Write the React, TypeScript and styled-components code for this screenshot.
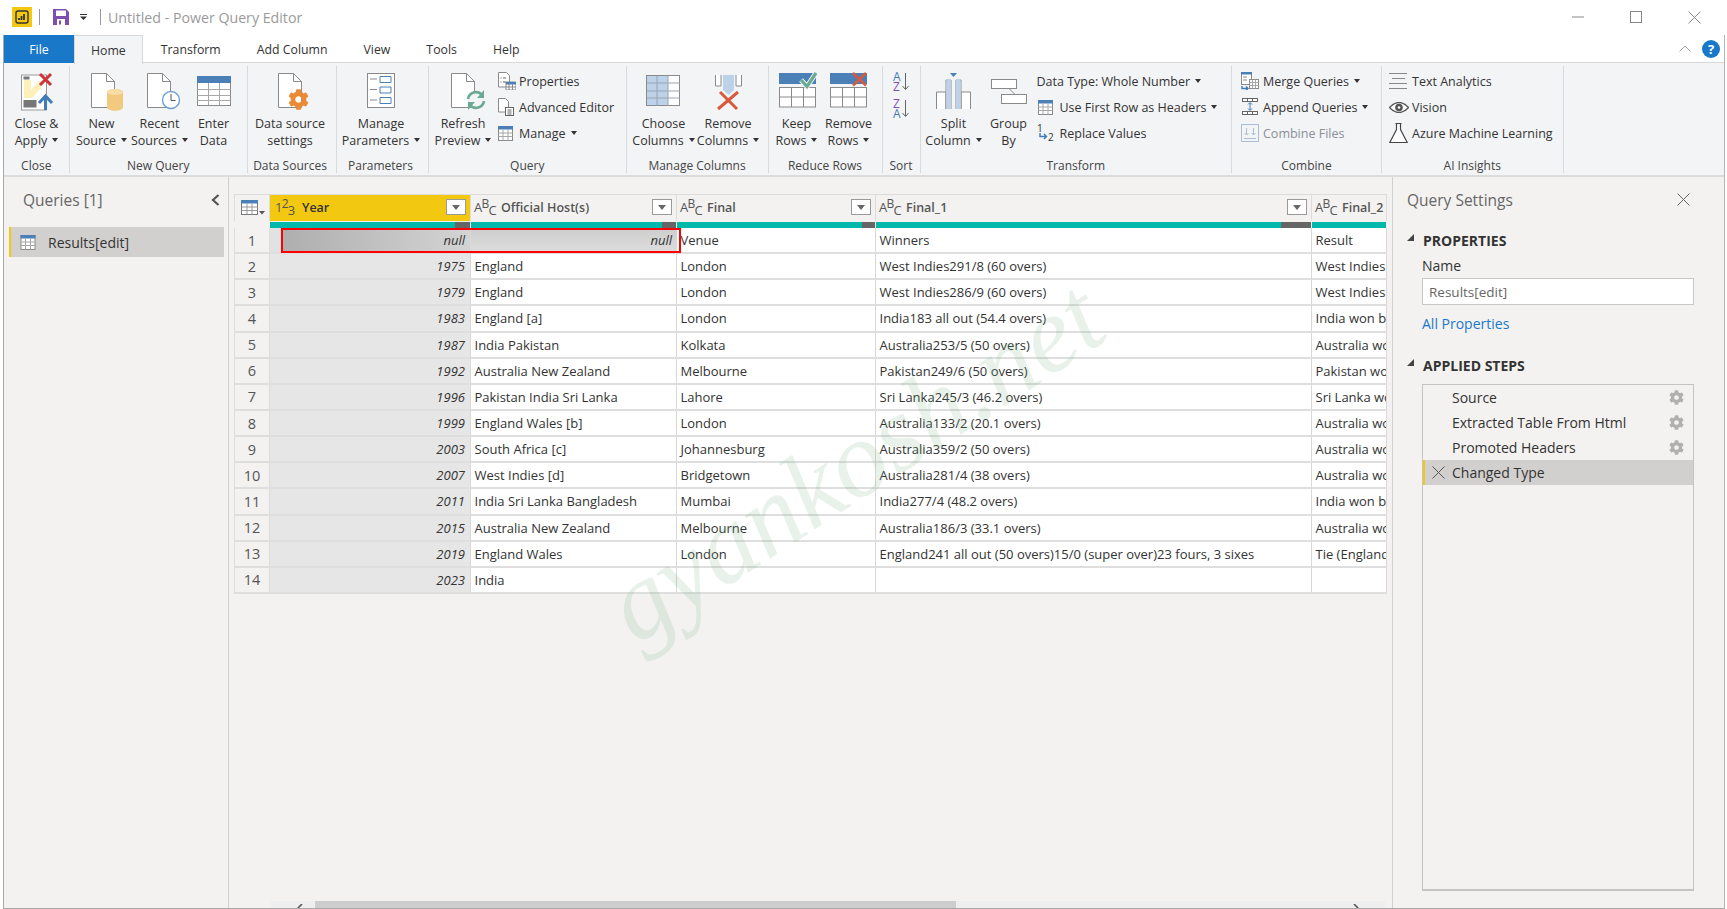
import React from 'react';
import styled, { createGlobalStyle } from 'styled-components';
import { FaCog } from 'react-icons/fa';

const GlobalStyle = createGlobalStyle`
  html, body {
    margin: 0;
    padding: 0;
    background: #fff;
    overflow: hidden;
  }
  * {
    box-sizing: border-box;
  }
`;

const FONT = '"Open Sans", "Noto Sans", "Liberation Sans", sans-serif';
const COLS = '36px 201px 206px 199px 436px 75px';

const Frame = styled.div`
  width: 1727px;
  height: 909px;
  padding: 0 2px 0 3px;
  font-family: ${FONT};
  font-size: 12.5px;
  color: #333;
  display: flex;
  flex-direction: column;
`;

const Window = styled.div`
  flex: 1;
  min-height: 0;
  border-left: 1px solid #a8a8a8;
  border-right: 1px solid #b4b4b4;
  border-bottom: 1px solid #a8a8a8;
  display: flex;
  flex-direction: column;
`;

const TitleBar = styled.div`
  height: 35px;
  display: flex;
  align-items: center;
  padding: 0 0 1px 9px;
  background: #fff;
`;

const TitleDivider = styled.span<{ $ml: number }>`
  width: 1px;
  height: 16px;
  background: #999;
  margin-left: ${(p) => p.$ml}px;
`;

const TitleText = styled.span`
  margin-left: 7px;
  font-size: 14.2px;
  color: #9a9a9a;
`;

const WindowControls = styled.div`
  margin-left: auto;
  display: flex;
  align-items: center;
  padding-right: 24px;
  gap: 46px;
`;

const TabBar = styled.div`
  height: 28px;
  display: flex;
  align-items: flex-start;
  border-bottom: 1px solid #d8d8d8;
  background: #fff;
  font-size: 12.3px;
`;

const FileTab = styled.div`
  width: 70px;
  height: 28px;
  background: #1a78c9;
  color: #fff;
  display: flex;
  align-items: center;
  justify-content: center;
`;

const Tab = styled.div<{ $active?: boolean }>`
  height: ${(p) => (p.$active ? 29 : 27)}px;
  padding: 1px ${(p) => (p.$active ? 16 : 18)}px 0;
  display: flex;
  align-items: center;
  color: #333;
  background: ${(p) => (p.$active ? '#f3f4f6' : '#fff')};
  border: ${(p) => (p.$active ? '1px solid #d8d8d8' : 'none')};
  border-bottom: none;
  position: relative;
`;

const TabTools = styled.div`
  margin-left: auto;
  height: 27px;
  display: flex;
  align-items: center;
  gap: 11px;
  padding-right: 4px;
`;

const HelpBadge = styled.span`
  width: 18px;
  height: 18px;
  border-radius: 50%;
  background: #1a78c9;
  color: #fff;
  font-size: 13px;
  font-weight: 700;
  display: flex;
  align-items: center;
  justify-content: center;
`;

const Ribbon = styled.div`
  height: 114px;
  padding-top: 3px;
  background: #f3f4f6;
  border-bottom: 2px solid #dcdcdc;
  display: flex;
  align-items: flex-start;
`;

const Group = styled.div<{ $w: number; $pr?: number }>`
  width: ${(p) => p.$w}px;
  height: 107px;
  padding-right: ${(p) => p.$pr ?? 0}px;
  border-right: 1px solid #d9dade;
  display: flex;
  flex-direction: column;
`;

const GroupBody = styled.div<{ $pl?: number }>`
  flex: 1;
  display: flex;
  align-items: flex-start;
  padding-left: ${(p) => p.$pl ?? 0}px;
`;

const GroupLabel = styled.div`
  height: 17px;
  margin-bottom: -1px;
  line-height: 17px;
  text-align: center;
  font-size: 12px;
  color: #444;
  white-space: nowrap;
`;

const BigButton = styled.div<{ $w: number }>`
  width: ${(p) => p.$w}px;
  flex: none;
  padding-top: 7px;
  display: flex;
  flex-direction: column;
  align-items: center;
  text-align: center;
  line-height: 17px;
  white-space: nowrap;
`;

const IconBox = styled.div<{ $dx?: number }>`
  height: 38px;
  margin-bottom: 4px;
  margin-left: ${(p) => p.$dx ?? 0}px;
  display: flex;
  justify-content: center;
  svg {
    overflow: visible;
    display: block;
  }
`;

const Caret = styled.span`
  display: inline-block;
  width: 0;
  height: 0;
  margin-left: 5px;
  vertical-align: 3px;
  border-left: 3.5px solid transparent;
  border-right: 3.5px solid transparent;
  border-top: 4px solid #333;
`;

const SmallColumn = styled.div<{ $ml?: number }>`
  padding-top: 2px;
  margin-left: ${(p) => p.$ml ?? 0}px;
  display: flex;
  flex-direction: column;
`;

const SmallButton = styled.div<{ $disabled?: boolean }>`
  height: 26px;
  display: flex;
  align-items: center;
  white-space: nowrap;
  color: ${(p) => (p.$disabled ? '#8a8f96' : '#333')};
`;

const SmallIcon = styled.span<{ $w?: number }>`
  width: ${(p) => p.$w ?? 22}px;
  flex: none;
  display: flex;
  align-items: center;
`;

const SortStack = styled.div`
  flex: 1;
  padding-top: 6px;
  display: flex;
  flex-direction: column;
  align-items: center;
  gap: 8px;
`;

const Body = styled.div`
  flex: 1;
  min-height: 0;
  display: flex;
  background: #f3f2f1;
`;

const QueriesPane = styled.aside`
  width: 225px;
  flex: none;
  border-right: 1px solid #d0d0d0;
  padding: 11px 0 0 5px;
`;

const PaneHeader = styled.div`
  height: 23px;
  padding: 0 8px 0 14px;
  display: flex;
  align-items: center;
  justify-content: space-between;
  font-size: 15.5px;
  color: #666;
`;

const QueryRow = styled.div`
  width: 215px;
  height: 30px;
  margin-top: 16px;
  background: #d2d0ce;
  border-left: 2px solid #f2c811;
  padding-left: 9px;
  display: flex;
  align-items: center;
  gap: 12px;
  font-size: 14px;
  color: #333;
`;

const Center = styled.main`
  flex: 1;
  min-width: 0;
  position: relative;
  padding: 17px 0 0 5px;
  display: flex;
  flex-direction: column;
`;

const TableWrap = styled.div`
  width: 1153px;
  flex: 1;
  min-height: 0;
  overflow: hidden;
  font-size: 13px;
`;

const HeaderRow = styled.div`
  height: 27px;
  display: grid;
  grid-template-columns: ${COLS};
  border-top: 1px solid #dcdcdc;
`;

const HeaderCell = styled.div<{ $selected?: boolean }>`
  display: flex;
  align-items: center;
  padding: 0 0 2px ${(p) => (p.$selected ? 5 : 3)}px;
  background: ${(p) => (p.$selected ? '#f2c811' : '#f3f2f1')};
  border-right: 1px solid #dcdcdc;
  font-weight: 600;
  font-size: 12.5px;
  color: ${(p) => (p.$selected ? '#333' : '#555')};
  white-space: nowrap;
  overflow: hidden;
`;

const CornerCell = styled(HeaderCell)`
  border-left: 1px solid #dcdcdc;
  padding-left: 6px;
`;

const TypeGlyph = styled.span`
  width: 27px;
  flex: none;
  font-size: 13px;
  font-weight: 400;
  color: #555;
  letter-spacing: -0.8px;
`;

const GlyphUp = styled.span`
  position: relative;
  top: -4px;
  font-size: 12px;
`;

const GlyphDown = styled.span`
  position: relative;
  top: 3px;
  font-size: 13px;
`;

const FilterButton = styled.span`
  width: 20px;
  height: 16px;
  margin-left: auto;
  margin-right: 4px;
  flex: none;
  background: #fff;
  border: 1px solid #9a9a9a;
  display: flex;
  align-items: center;
  justify-content: center;
  &::after {
    content: '';
    border-left: 4px solid transparent;
    border-right: 4px solid transparent;
    border-top: 5px solid #666;
  }
`;

const QualityRow = styled.div`
  height: 6px;
  margin-top: 1px;
  display: grid;
  grid-template-columns: ${COLS};
`;

const QualityCell = styled.div<{ $empty: number }>`
  display: flex;
  border-right: 1px solid #f3f2f1;
  &::before {
    content: '';
    flex: 1;
    background: #01b8aa;
  }
  &::after {
    content: '';
    width: ${(p) => p.$empty}px;
    background: #666;
  }
`;

const BlankCell = styled.div``;

const DataRow = styled.div`
  position: relative;
  height: 26.15px;
  display: grid;
  grid-template-columns: ${COLS};
  border-bottom: 2px solid #dedede;
`;

const RowNumber = styled.div`
  border-left: 1px solid #dcdcdc;
  border-right: 1px solid #dcdcdc;
  background: #f3f2f1;
  display: flex;
  align-items: center;
  justify-content: center;
  font-size: 14.5px;
  color: #555;
`;

const YearCell = styled.div<{ $null?: boolean }>`
  background: ${(p) => (p.$null ? 'linear-gradient(90deg, #e2e2e2 5.5%, #aeaeae 6.5%, #d4d4d4 100%)' : '#e6e6e6')};
  border-right: 1px solid #d8d8d8;
  padding-right: 5px;
  display: flex;
  align-items: center;
  justify-content: flex-end;
  font-style: italic;
  color: #333;
`;

const NullCell = styled.div`
  background: linear-gradient(180deg, #cdcdcd, #dddddd);
  padding-right: 5px;
  display: flex;
  align-items: center;
  justify-content: flex-end;
  font-style: italic;
  color: #333;
`;

const TextCell = styled.div`
  background: #fff;
  border-right: 1px solid #d8d8d8;
  padding-left: 3.5px;
  display: flex;
  align-items: center;
  white-space: nowrap;
  overflow: hidden;
  color: #333;
`;

const RedBox = styled.div`
  position: absolute;
  left: 47px;
  top: 0;
  width: 400px;
  height: 25px;
  border: 2px solid #ff0000;
  pointer-events: none;
`;

const Watermark = styled.div`
  position: absolute;
  left: 625px;
  top: 284px;
  transform: translate(-50%, -50%) rotate(-33deg);
  font-family: 'Liberation Serif', serif;
  font-style: italic;
  font-size: 108px;
  color: rgba(120, 180, 130, 0.17);
  white-space: nowrap;
  pointer-events: none;
`;

const ScrollTrack = styled.div`
  width: 1114px;
  height: 7px;
  margin-left: 37px;
  flex: none;
  background: #eeeeee;
  display: flex;
  align-items: flex-start;
  overflow: hidden;
`;

const ScrollThumb = styled.div`
  width: 641px;
  height: 7px;
  margin-left: 12px;
  background: #cdcdcd;
`;

const ScrollArrow = styled.svg<{ $right?: boolean }>`
  margin: 3px ${(p) => (p.$right ? 26 : 0)}px 0 ${(p) => (p.$right ? 'auto' : '26px')};
  flex: none;
`;

const SettingsPane = styled.aside`
  width: 332px;
  flex: none;
  border-left: 1px solid #d0d0d0;
  padding: 11px 30px 17px 14px;
  display: flex;
  flex-direction: column;
`;

const SettingsHeader = styled.div`
  height: 23px;
  display: flex;
  align-items: center;
  justify-content: space-between;
  padding-right: 4px;
  font-size: 15.5px;
  color: #666;
`;

const SectionTitle = styled.div<{ $mt: number }>`
  margin-top: ${(p) => p.$mt}px;
  height: 20px;
  display: flex;
  align-items: center;
  gap: 9px;
  font-size: 14px;
  font-weight: 700;
  color: #333;
`;

const SectionCaret = styled.svg`
  flex: none;
  margin-top: -6px;
`;

const Indented = styled.div`
  margin-left: 15px;
`;

const FieldLabel = styled.div`
  margin-top: 6px;
  height: 20px;
  line-height: 20px;
  font-size: 14px;
  color: #333;
`;

const NameInput = styled.div`
  margin-top: 2px;
  height: 27px;
  padding-left: 6px;
  background: #fff;
  border: 1px solid #c8c8c8;
  display: flex;
  align-items: center;
  font-size: 13.5px;
  color: #666;
`;

const AllProps = styled.div`
  margin-top: 9px;
  height: 20px;
  line-height: 20px;
  font-size: 14px;
  color: #1a78c9;
`;

const StepsBox = styled(Indented)`
  flex: 1;
  margin-top: 9px;
  background: #f3f2f1;
  border: 1px solid #c4c4c4;
  border-bottom: 2px solid #c4c4c4;
`;

const StepRow = styled.div<{ $selected?: boolean }>`
  height: 25px;
  display: flex;
  align-items: center;
  padding-right: 9px;
  background: ${(p) => (p.$selected ? '#d2d0ce' : 'transparent')};
  border-left: 2px solid ${(p) => (p.$selected ? '#f2c811' : 'transparent')};
  font-size: 14px;
  color: #333;
`;

const StepMark = styled.span`
  width: 27px;
  padding-left: 7px;
  flex: none;
  display: flex;
`;

const StepGear = styled.span`
  margin-left: auto;
  display: flex;
  color: #b0b0b0;
`;

const Doc = () => (
  <>
    <path d="M.5.5h15l8 8v26H.5z" fill="#fff" stroke="#8a8a8a" />
    <path d="M15.5.5v8h8" fill="none" stroke="#8a8a8a" />
  </>
);

const LogoIcon = () => (
  <svg width="20" height="20" viewBox="0 0 20 20">
    <rect width="20" height="20" fill="#f2c811" />
    <rect x="4" y="4" width="12" height="12" rx="2" fill="none" stroke="#333" strokeWidth="1.4" />
    <path d="M7 13v-2M9.5 13V9M12 13V7" stroke="#333" strokeWidth="1.8" />
  </svg>
);

const SaveIcon = () => (
  <svg width="16" height="16" viewBox="0 0 16 16" style={{ marginLeft: 13 }}>
    <path d="M0 0h13l3 3v13H0z" fill="#7e4fb0" />
    <rect x="3" y="1.5" width="10" height="5.5" fill="#fff" />
    <rect x="4" y="10" width="8" height="6" fill="#fff" />
    <rect x="6" y="11.5" width="2" height="4" fill="#7e4fb0" />
  </svg>
);

const QuickCaret = () => (
  <svg width="7" height="6" viewBox="0 0 7 6" style={{ marginLeft: 11 }}>
    <path d="M0 0h7v1H0zM0 2.5h7L3.5 6z" fill="#333" />
  </svg>
);

const MinIcon = () => (
  <svg width="12" height="12" viewBox="0 0 12 12"><path d="M0 6h12" stroke="#888" /></svg>
);
const MaxIcon = () => (
  <svg width="12" height="12" viewBox="0 0 12 12"><rect x=".5" y=".5" width="11" height="11" fill="none" stroke="#888" /></svg>
);
const CloseIcon = ({ c = '#888' }: { c?: string }) => (
  <svg width="13" height="13" viewBox="0 0 13 13"><path d="M.5.5l12 12M12.5.5l-12 12" stroke={c} fill="none" /></svg>
);
const CollapseIcon = () => (
  <svg width="12" height="7" viewBox="0 0 12 7"><path d="M.5 6.5L6 1l5.5 5.5" stroke="#aaa" fill="none" /></svg>
);

const CloseApplyIcon = () => (
  <svg width="32" height="38" viewBox="0 0 32 38">
    <rect x=".5" y="2" width="25" height="35" fill="#fff" stroke="#999" />
    <path d="M3 7h7v10l8-9h2v7l-9 10H3z" fill="#fdf0b8" />
    <rect x="2.5" y="3.5" width="6" height="3" fill="#777" />
    <rect x="2.5" y="27" width="13" height="7.5" fill="#777" />
    <path d="M19 1l11 11M30 1L19 12" stroke="#d13438" strokeWidth="3" />
    <path d="M24.5 37V25M18 30l6.5-7 6.5 7" fill="none" stroke="#3f7cb8" strokeWidth="3" />
  </svg>
);

const NewSourceIcon = () => (
  <svg width="32" height="38" viewBox="0 0 32 38">
    <Doc />
    <path d="M16 19c0-4 16-4 16 0v15c0 5-16 5-16 0z" fill="#f1c97f" />
    <ellipse cx="24" cy="19" rx="8" ry="3" fill="#f7dca6" />
  </svg>
);

const RecentIcon = () => (
  <svg width="33" height="38" viewBox="0 0 33 38">
    <Doc />
    <circle cx="24" cy="27" r="8.5" fill="#fff" stroke="#6f9fd0" strokeWidth="1.4" />
    <path d="M24 21v6.500h4.500" fill="none" stroke="#555" />
  </svg>
);

const TableIcon = () => (
  <svg width="34" height="38" viewBox="0 0 34 38">
    <rect x=".5" y="3.5" width="33" height="29" fill="#fff" stroke="#8a8a8a" />
    <rect y="3" width="34" height="7" fill="#4a7fb8" />
    <path d="M.5 16.500h33M.5 22.500h33M.5 27.500h33M11.500 10v22M22.500 10v22" stroke="#a8a8a8" />
  </svg>
);

const SettingsDocIcon = () => (
  <svg width="31" height="38" viewBox="0 0 31 38">
    <Doc />
    <FaCog x="10" y="16" size={21} color="#ea8a35" />
  </svg>
);

const ParamsIcon = () => (
  <svg width="28" height="38" viewBox="0 0 28 38">
    <rect x=".5" y=".5" width="27" height="34" fill="#fff" stroke="#8a8a8a" />
    <path d="M3 6h7M3 16.500h7M3 27h7" stroke="#8a8a8a" />
    <path d="M13 3.500h11v6H13zM13 14h11v6H13zM13 24.500h11v6H13z" fill="#fff" stroke="#4a7fb8" />
  </svg>
);

const RefreshIcon = () => (
  <svg width="34" height="38" viewBox="0 0 34 38">
    <Doc />
    <circle cx="25" cy="27" r="8.500" fill="#f3f4f6" />
    <path d="M17 26a8 8 0 0 1 14-4M33 28a8 8 0 0 1-14 4" fill="none" stroke="#6aaa92" strokeWidth="2.600" />
    <path d="M33 17v8h-7zM17 37v-8h7z" fill="#6aaa92" />
  </svg>
);

const ChooseColsIcon = () => (
  <svg width="34" height="38" viewBox="0 0 34 38">
    <rect x="0" y="2" width="22" height="31" fill="#bcd2e8" />
    <rect x="22" y="2" width="11.500" height="31" fill="#fff" />
    <rect x=".5" y="2.500" width="33" height="30" fill="none" stroke="#8a8a8a" />
    <path d="M11 3v30M22 3v30M.5 10h33M.5 18h33M.5 25h33" stroke="#9aa4b0" />
  </svg>
);

const RemoveColsIcon = () => (
  <svg width="27" height="38" viewBox="0 0 27 38">
    <path d="M.5 2v11h5.500V2M21 2v11h5.500V2" fill="#fff" stroke="#8a8a8a" />
    <path d="M8 2h11v15l-5.500 5L8 17z" fill="#bcd2e8" />
    <path d="M3 36l20-17M5 19l17 17" stroke="#d9593d" strokeWidth="3" />
  </svg>
);

const RowsGrid = () => (
  <>
    <rect x=".5" y="14.500" width="36" height="19.500" fill="#fff" stroke="#8a8a8a" />
    <path d="M.5 24h36M12.500 14v20M24.500 14v20" stroke="#8a8a8a" />
    <rect y="0" width="37" height="11" fill="#4a7fb8" />
  </>
);

const KeepRowsIcon = () => (
  <svg width="37" height="38" viewBox="0 0 37 38">
    <RowsGrid />
    <path d="M22 7l6 6.500L37 0" fill="none" stroke="#f3f4f6" strokeWidth="5" />
    <path d="M22 7l6 6.500L37 0" fill="none" stroke="#6aaa92" strokeWidth="3.200" />
  </svg>
);

const RemoveRowsIcon = () => (
  <svg width="37" height="38" viewBox="0 0 37 38">
    <RowsGrid />
    <path d="M23 0l13 12.500M36 0L23 12.500" stroke="#d9593d" strokeWidth="2.600" />
  </svg>
);

const SortIcon = ({ top, bottom, topC, botC }: { top: string; bottom: string; topC: string; botC: string }) => (
  <svg width="17" height="19" viewBox="0 0 17 19">
    <text x="0" y="9" fontFamily={FONT} fontSize="12" fill={topC}>{top}</text>
    <text x="0" y="18.500" fontFamily={FONT} fontSize="12" fill={botC}>{bottom}</text>
    <path d="M12.500 1v16M9.500 14l3 3.500 3-3.500" fill="none" stroke="#666" />
  </svg>
);

const SplitIcon = () => (
  <svg width="35" height="38" viewBox="0 0 35 38">
    <path d="M.5 36V19h9.500v17M25 36V19h9.500v17" fill="#fff" stroke="#8a8a8a" />
    <path d="M10 36V7h5v29M20 36V7h5v29" fill="#fff" stroke="#8a8a8a" />
    <rect x="10.500" y="6" width="4.500" height="30" fill="#bcd2e8" />
    <rect x="20" y="6" width="4.500" height="30" fill="#bcd2e8" />
    <path d="M14 0h7l-3.500 4z" fill="#4a7fb8" />
  </svg>
);

const GroupByIcon = () => (
  <svg width="36" height="38" viewBox="0 0 36 38">
    <rect x=".5" y="6.500" width="25" height="9" fill="#fff" stroke="#8a8a8a" />
    <rect x="10.500" y="21.500" width="25" height="9" fill="#fff" stroke="#8a8a8a" />
    <path d="M18 15.500l6 6" stroke="#8a8a8a" />
  </svg>
);

const PropertiesIcon = () => (
  <svg width="18" height="18" viewBox="0 0 18 18">
    <path d="M.5.500h8l3 3V15H.5z" fill="#fff" stroke="#8a8a8a" />
    <path d="M2.500 6h1M5 6h3M2.500 10h1M5 10h3" stroke="#666" />
    <rect x="8" y="10" width="10" height="8" fill="#fff" stroke="#8a8a8a" />
    <rect x="8" y="10" width="10" height="2.500" fill="#4a7fb8" />
    <path d="M8 15h10M11 12v6M14.500 12v6" stroke="#8a8a8a" />
  </svg>
);

const EditorIcon = () => (
  <svg width="16" height="18" viewBox="0 0 16 18">
    <path d="M.5.500h7l3 3V14H.5z" fill="#fff" stroke="#8a8a8a" />
    <rect x="7.500" y="9.500" width="8" height="8" fill="#fff" stroke="#666" />
    <path d="M9.500 12h4M9.500 14h4M9.500 16h4" stroke="#666" />
  </svg>
);

const SmallTableIcon = ({ w = 15 }: { w?: number }) => (
  <svg width={w} height="15" viewBox="0 0 15 15">
    <rect x=".5" y=".5" width="14" height="14" fill="#fff" stroke="#8a8a8a" />
    <rect width="15" height="3.500" fill="#4a7fb8" />
    <path d="M.5 7h14M.5 10.500h14M5 3.500v11M10 3.500v11" stroke="#a8a8a8" />
  </svg>
);

const ReplaceIcon = () => (
  <svg width="18" height="18" viewBox="0 0 18 18">
    <text x="0" y="8" fontFamily={FONT} fontSize="10" fill="#333">1</text>
    <text x="11" y="17" fontFamily={FONT} fontSize="10" fill="#333">2</text>
    <path d="M3 9v3.500h6M7 10l2.500 2.500L7 15" fill="none" stroke="#3f7cb8" strokeWidth="1.400" />
  </svg>
);

const MergeIcon = () => (
  <svg width="18" height="18" viewBox="0 0 18 18">
    <rect x=".5" y=".5" width="10" height="12" fill="#fff" stroke="#8a8a8a" />
    <rect width="11" height="2.500" fill="#4a7fb8" />
    <path d="M2 5h4M2 8h4" stroke="#888" />
    <rect x="8.500" y="7.500" width="9" height="9" fill="#fff" stroke="#8a8a8a" />
    <path d="M8.500 10.500h9M8.500 13.500h9M11.500 7.500v9M14.500 7.500v9" stroke="#a8a8a8" />
    <path d="M1 14v2.500h6M5 14.500l2 2-2 2" fill="none" stroke="#3f7cb8" strokeWidth="1.400" />
  </svg>
);

const AppendIcon = () => (
  <svg width="18" height="18" viewBox="0 0 18 18" style={{ marginLeft: 1 }}>
    <rect x=".5" y=".5" width="15" height="3" fill="#fff" stroke="#666" />
    <path d="M5.500.5v3M10.500.5v3" stroke="#666" />
    <rect x=".5" y="13.500" width="15" height="3" fill="#fff" stroke="#666" />
    <path d="M5.500 13.500v3M10.500 13.500v3" stroke="#666" />
    <path d="M8 5v7M6 6.500L8 4.500l2 2M6 10.500l2 2 2-2" fill="none" stroke="#3f7cb8" />
  </svg>
);

const CombineIcon = () => (
  <svg width="18" height="18" viewBox="0 0 18 18">
    <rect x=".5" y=".5" width="17" height="17" fill="#f3f4f6" stroke="#a9bdd6" />
    <path d="M5.500 4v7M3.500 9l2 2 2-2M12.500 4v7M10.500 9l2 2 2-2M3 14.500h12" fill="none" stroke="#a9bdd6" />
  </svg>
);

const TextLinesIcon = () => (
  <svg width="18" height="16" viewBox="0 0 18 16">
    <path d="M0 .5h18M3 5.500h13M0 10.500h18M0 15.500h18" stroke="#888" />
  </svg>
);

const EyeIcon = () => (
  <svg width="20" height="11" viewBox="0 0 20 11">
    <path d="M.5 5.500C4 1.500 7 .5 10 .5s6 1 9.500 5c-3.500 4-6.500 5-9.500 5s-6-1-9.500-5z" fill="#fff" stroke="#555" strokeWidth="1.400" />
    <circle cx="10" cy="5.500" r="3.800" fill="#555" />
    <circle cx="10" cy="5.500" r="1.300" fill="#fff" />
  </svg>
);

const FlaskIcon = () => (
  <svg width="19" height="20" viewBox="0 0 19 20">
    <path d="M6.500.500h6M7.500.500v6L.8 19.500h17.400L11.500 6.500v-6" fill="#fff" stroke="#444" strokeWidth="1.200" />
  </svg>
);

const BackIcon = () => (
  <svg width="9" height="12" viewBox="0 0 9 12">
    <path d="M7.500 1L2 6l5.500 5" fill="none" stroke="#555" strokeWidth="2.200" />
  </svg>
);

const CornerIcon = () => (
  <svg width="24" height="15" viewBox="0 0 24 15">
    <rect x=".5" y=".5" width="16" height="14" fill="#fff" stroke="#777" />
    <rect width="17" height="3.500" fill="#4a7fb8" />
    <path d="M.5 7h16M.5 10.500h16M6 3.500v11M11 3.500v11" stroke="#999" />
    <path d="M18 11h6l-3 3.500z" fill="#555" />
  </svg>
);

const Big = ({ lines, caret, w, dx, icon }: { lines: [string, string]; caret?: boolean; w: number; dx?: number; icon: React.ReactNode }) => (
  <BigButton $w={w}>
    <IconBox $dx={dx}>{icon}</IconBox>
    <span>{lines[0]}</span>
    <span>
      {lines[1]}
      {caret && <Caret />}
    </span>
  </BigButton>
);

const Small = ({ icon, text, caret, disabled, iconW }: { icon?: React.ReactNode; text: string; caret?: boolean; disabled?: boolean; iconW?: number }) => (
  <SmallButton $disabled={disabled}>
    {icon && <SmallIcon $w={iconW}>{icon}</SmallIcon>}
    {text}
    {caret && <Caret />}
  </SmallButton>
);

const TABS = ['Transform', 'Add Column', 'View', 'Tools', 'Help'];

const ROWS: [string, string, string, string, string][] = [
  ['1975', 'England', 'London', 'West Indies291/8 (60 overs)', 'West Indies won by 17 runs'],
  ['1979', 'England', 'London', 'West Indies286/9 (60 overs)', 'West Indies won by 92 runs'],
  ['1983', 'England [a]', 'London', 'India183 all out (54.4 overs)', 'India won by 43 runs'],
  ['1987', 'India Pakistan', 'Kolkata', 'Australia253/5 (50 overs)', 'Australia won by 7 runs'],
  ['1992', 'Australia New Zealand', 'Melbourne', 'Pakistan249/6 (50 overs)', 'Pakistan won by 22 runs'],
  ['1996', 'Pakistan India Sri Lanka', 'Lahore', 'Sri Lanka245/3 (46.2 overs)', 'Sri Lanka won by 7 wickets'],
  ['1999', 'England Wales [b]', 'London', 'Australia133/2 (20.1 overs)', 'Australia won by 8 wickets'],
  ['2003', 'South Africa [c]', 'Johannesburg', 'Australia359/2 (50 overs)', 'Australia won by 125 runs'],
  ['2007', 'West Indies [d]', 'Bridgetown', 'Australia281/4 (38 overs)', 'Australia won by 53 runs'],
  ['2011', 'India Sri Lanka Bangladesh', 'Mumbai', 'India277/4 (48.2 overs)', 'India won by 6 wickets'],
  ['2015', 'Australia New Zealand', 'Melbourne', 'Australia186/3 (33.1 overs)', 'Australia won by 7 wickets'],
  ['2019', 'England Wales', 'London', 'England241 all out (50 overs)15/0 (super over)23 fours, 3 sixes', 'Tie (England won on boundaries)'],
  ['2023', 'India', '', '', ''],
];

const AbcGlyph = () => (
  <TypeGlyph>
    A<GlyphUp>B</GlyphUp>
    <GlyphDown>C</GlyphDown>
  </TypeGlyph>
);

const Ribbons = () => (
  <Ribbon>
    <Group $w={65.5}>
      <GroupBody>
        <Big w={65} lines={['Close &', 'Apply']} caret icon={<CloseApplyIcon />} />
      </GroupBody>
      <GroupLabel>Close</GroupLabel>
    </Group>
    <Group $w={178.5}>
      <GroupBody $pl={2}>
        <Big w={60} lines={['New', 'Source']} caret dx={10} icon={<NewSourceIcon />} />
        <Big w={56} lines={['Recent', 'Sources']} caret dx={7} icon={<RecentIcon />} />
        <Big w={52} lines={['Enter', 'Data']} icon={<TableIcon />} />
      </GroupBody>
      <GroupLabel>New Query</GroupLabel>
    </Group>
    <Group $w={89} $pr={4}>
      <GroupBody>
        <Big w={84} lines={['Data source', 'settings']} dx={6} icon={<SettingsDocIcon />} />
      </GroupBody>
      <GroupLabel>Data Sources</GroupLabel>
    </Group>
    <Group $w={92} $pr={4}>
      <GroupBody>
        <Big w={88} lines={['Manage', 'Parameters']} caret icon={<ParamsIcon />} />
      </GroupBody>
      <GroupLabel>Parameters</GroupLabel>
    </Group>
    <Group $w={197.5}>
      <GroupBody $pl={3}>
        <Big w={62} lines={['Refresh', 'Preview']} caret dx={10} icon={<RefreshIcon />} />
        <SmallColumn $ml={4}>
          <Small iconW={21} icon={<PropertiesIcon />} text="Properties" />
          <Small iconW={21} icon={<EditorIcon />} text="Advanced Editor" />
          <Small iconW={21} icon={<SmallTableIcon />} text="Manage" caret />
        </SmallColumn>
      </GroupBody>
      <GroupLabel>Query</GroupLabel>
    </Group>
    <Group $w={142}>
      <GroupBody $pl={2}>
        <Big w={70} lines={['Choose', 'Columns']} caret dx={-2} icon={<ChooseColsIcon />} />
        <Big w={59} lines={['Remove', 'Columns']} caret icon={<RemoveColsIcon />} />
      </GroupBody>
      <GroupLabel>Manage Columns</GroupLabel>
    </Group>
    <Group $w={114}>
      <GroupBody $pl={3}>
        <Big w={50} lines={['Keep', 'Rows']} caret dx={2} icon={<KeepRowsIcon />} />
        <Big w={54} lines={['Remove', 'Rows']} caret icon={<RemoveRowsIcon />} />
      </GroupBody>
      <GroupLabel>Reduce Rows</GroupLabel>
    </Group>
    <Group $w={38}>
      <GroupBody>
        <SortStack>
          <SortIcon top="A" bottom="Z" topC="#3f7cb8" botC="#7e4fb0" />
          <SortIcon top="Z" bottom="A" topC="#7e4fb0" botC="#3f7cb8" />
        </SortStack>
      </GroupBody>
      <GroupLabel>Sort</GroupLabel>
    </Group>
    <Group $w={311.5}>
      <GroupBody $pl={3}>
        <Big w={60} lines={['Split', 'Column']} caret icon={<SplitIcon />} />
        <Big w={50} lines={['Group', 'By']} icon={<GroupByIcon />} />
        <SmallColumn $ml={3}>
          <Small text="Data Type: Whole Number" caret />
          <Small iconW={23} icon={<SmallTableIcon w={17} />} text="Use First Row as Headers" caret />
          <Small iconW={23} icon={<ReplaceIcon />} text="Replace Values" />
        </SmallColumn>
      </GroupBody>
      <GroupLabel>Transform</GroupLabel>
    </Group>
    <Group $w={150}>
      <GroupBody $pl={9}>
        <SmallColumn>
          <Small icon={<MergeIcon />} text="Merge Queries" caret />
          <Small icon={<AppendIcon />} text="Append Queries" caret />
          <Small icon={<CombineIcon />} text="Combine Files" disabled />
        </SmallColumn>
      </GroupBody>
      <GroupLabel>Combine</GroupLabel>
    </Group>
    <Group $w={181.5}>
      <GroupBody $pl={7}>
        <SmallColumn>
          <Small iconW={23} icon={<TextLinesIcon />} text="Text Analytics" />
          <Small iconW={23} icon={<EyeIcon />} text="Vision" />
          <Small iconW={23} icon={<FlaskIcon />} text="Azure Machine Learning" />
        </SmallColumn>
      </GroupBody>
      <GroupLabel>AI Insights</GroupLabel>
    </Group>
  </Ribbon>
);

const Grid = () => (
  <TableWrap>
    <HeaderRow>
      <CornerCell><CornerIcon /></CornerCell>
      <HeaderCell $selected>
        <TypeGlyph>1<GlyphUp>2</GlyphUp><GlyphDown>3</GlyphDown></TypeGlyph>
        Year
        <FilterButton />
      </HeaderCell>
      <HeaderCell><AbcGlyph />Official Host(s)<FilterButton /></HeaderCell>
      <HeaderCell><AbcGlyph />Final<FilterButton /></HeaderCell>
      <HeaderCell><AbcGlyph />Final_1<FilterButton /></HeaderCell>
      <HeaderCell><AbcGlyph />Final_2</HeaderCell>
    </HeaderRow>
    <QualityRow>
      <BlankCell />
      <QualityCell $empty={15} />
      <QualityCell $empty={14} />
      <QualityCell $empty={13} />
      <QualityCell $empty={30} />
      <QualityCell $empty={0} />
    </QualityRow>
    <DataRow>
      <RowNumber>1</RowNumber>
      <YearCell $null>null</YearCell>
      <NullCell>null</NullCell>
      <TextCell>Venue</TextCell>
      <TextCell>Winners</TextCell>
      <TextCell>Result</TextCell>
      <RedBox />
    </DataRow>
    {ROWS.map((row, i) => (
      <DataRow key={row[0]}>
        <RowNumber>{i + 2}</RowNumber>
        <YearCell>{row[0]}</YearCell>
        <TextCell>{row[1]}</TextCell>
        <TextCell>{row[2]}</TextCell>
        <TextCell>{row[3]}</TextCell>
        <TextCell>{row[4]}</TextCell>
      </DataRow>
    ))}
  </TableWrap>
);

const SectionMark = () => (
  <SectionCaret width="7" height="7" viewBox="0 0 7 7">
    <path d="M7 0v7H0z" fill="#444" />
  </SectionCaret>
);

export default function App(): JSX.Element {
  return (
    <Frame>
      <GlobalStyle />
      <TitleBar>
        <LogoIcon />
        <TitleDivider $ml={7} />
        <SaveIcon />
        <QuickCaret />
        <TitleDivider $ml={13} />
        <TitleText>Untitled - Power Query Editor</TitleText>
        <WindowControls>
          <MinIcon />
          <MaxIcon />
          <CloseIcon />
        </WindowControls>
      </TitleBar>
      <Window>
        <TabBar>
          <FileTab>File</FileTab>
          <Tab $active>Home</Tab>
          {TABS.map((t) => (
            <Tab key={t}>{t}</Tab>
          ))}
          <TabTools>
            <CollapseIcon />
            <HelpBadge>?</HelpBadge>
          </TabTools>
        </TabBar>
        <Ribbons />
        <Body>
          <QueriesPane>
            <PaneHeader>
              Queries [1]
              <BackIcon />
            </PaneHeader>
            <QueryRow>
              <SmallTableIcon w={16} />
              Results[edit]
            </QueryRow>
          </QueriesPane>
          <Center>
            <Grid />
            <ScrollTrack>
              <ScrollArrow width="6" height="8" viewBox="0 0 6 8">
                <path d="M5 0L1 4v4" fill="none" stroke="#555" strokeWidth="1.600" />
              </ScrollArrow>
              <ScrollThumb />
              <ScrollArrow $right width="6" height="8" viewBox="0 0 6 8">
                <path d="M1 0l4 4v4" fill="none" stroke="#555" strokeWidth="1.600" />
              </ScrollArrow>
            </ScrollTrack>
            <Watermark>gyankosh.net</Watermark>
          </Center>
          <SettingsPane>
            <SettingsHeader>
              Query Settings
              <CloseIcon c="#666" />
            </SettingsHeader>
            <SectionTitle $mt={19}><SectionMark />PROPERTIES</SectionTitle>
            <Indented>
              <FieldLabel>Name</FieldLabel>
              <NameInput>Results[edit]</NameInput>
              <AllProps>All Properties</AllProps>
            </Indented>
            <SectionTitle $mt={21}><SectionMark />APPLIED STEPS</SectionTitle>
            <StepsBox>
              {['Source', 'Extracted Table From Html', 'Promoted Headers'].map((s) => (
                <StepRow key={s}>
                  <StepMark />
                  {s}
                  <StepGear><FaCog size={15} /></StepGear>
                </StepRow>
              ))}
              <StepRow $selected>
                <StepMark><CloseIcon c="#555" /></StepMark>
                Changed Type
              </StepRow>
            </StepsBox>
          </SettingsPane>
        </Body>
      </Window>
    </Frame>
  );
}
